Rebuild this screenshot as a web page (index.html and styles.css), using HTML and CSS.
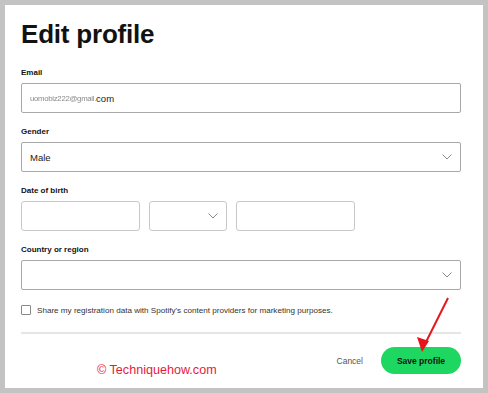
FILE: index.html
```html
<!DOCTYPE html>
<html lang="en">
<head>
<meta charset="utf-8">
<title>Edit profile</title>
<link rel="stylesheet" href="styles.css">
</head>
<body>
<div class="frame">
  <main class="card">
    <h1 class="title">Edit profile</h1>

    <div class="field">
      <label class="label">Email</label>
      <div class="input input-dark"><span class="blur">uomobiz222@gmail.</span><span>com</span></div>
    </div>

    <div class="field">
      <label class="label">Gender</label>
      <div class="input input-dark select"><span>Male</span>
        <svg class="chev" width="10" height="6" viewBox="0 0 10 6"><polyline points="0.5,0.5 5,5 9.5,0.5" fill="none" stroke="#8a8a8a" stroke-width="1"/></svg>
      </div>
    </div>

    <div class="field">
      <label class="label">Date of birth</label>
      <div class="dob">
        <div class="input input-light day"></div>
        <div class="input input-light select month">
          <svg class="chev" width="10" height="6" viewBox="0 0 10 6"><polyline points="0.5,0.5 5,5 9.5,0.5" fill="none" stroke="#8a8a8a" stroke-width="1"/></svg>
        </div>
        <div class="input input-light year"></div>
      </div>
    </div>

    <div class="field">
      <label class="label">Country or region</label>
      <div class="input input-dark select"><span></span>
        <svg class="chev" width="10" height="6" viewBox="0 0 10 6"><polyline points="0.5,0.5 5,5 9.5,0.5" fill="none" stroke="#8a8a8a" stroke-width="1"/></svg>
      </div>
    </div>

    <div class="consent">
      <span class="checkbox"></span>
      <span class="consent-text">Share my registration data with Spotify's content providers for marketing purposes.</span>
    </div>

    <div class="divider"></div>

    <div class="actions">
      <button class="cancel">Cancel</button>
      <button class="save">Save profile</button>
    </div>

    <div class="watermark">© Techniquehow.com</div>
    <svg class="arrow" width="478" height="383" viewBox="0 0 478 383">
      <line x1="443" y1="293" x2="418.5" y2="342" stroke="#e8141c" stroke-width="2"/>
      <polygon points="417,347 412,332 424,336" fill="#e8141c"/>
    </svg>
  </main>
</div>
</body>
</html>
```
FILE: styles.css
```css
* { box-sizing: border-box; }
html, body { margin: 0; padding: 0; }
body {
  background: #c3c3c3;
  width: 488px;
  height: 393px;
  overflow: hidden;
  font-family: "Liberation Sans", Arial, sans-serif;
}
.frame {
  padding: 5px 5px 5px 5px;
}
.card {
  position: relative;
  width: 478px;
  height: 383px;
  background: #ffffff;
  padding: 14px 22px 0 16px;
  display: flex;
  flex-direction: column;
}
.title {
  margin: 0;
  font-size: 26px;
  line-height: 30px;
  font-weight: 700;
  color: #121212;
  letter-spacing: -0.2px;
}
.field {
  display: flex;
  flex-direction: column;
  gap: 5px;
  margin-top: 14px;
}
.title + .field { margin-top: 19px; }
.label {
  font-size: 8px;
  line-height: 10px;
  font-weight: 700;
  color: #121212;
}
.input {
  height: 30px;
  width: 440px;
  border-radius: 2px;
  background: #fff;
  display: flex;
  align-items: center;
  padding: 0 8px;
  font-size: 9.5px;
  color: #222;
}
.input-dark { border: 1px solid #a8a8a8; }
.input-light { border: 1px solid #c8c8c8; border-radius: 3px; }
.blur {
  color: #8a8a8a;
  font-size: 7.8px;
  letter-spacing: -0.3px;
  filter: blur(0.5px);
}
.select { justify-content: space-between; }
.month { justify-content: flex-end; }
.chev { display: block; }
.dob {
  display: flex;
  gap: 9px;
}
.day, .year { width: 119px; }
.month { width: 78px; }
.consent {
  margin-top: 15px;
  display: flex;
  align-items: center;
  gap: 6px;
  height: 10px;
}
.checkbox {
  width: 10px;
  height: 10px;
  border: 1px solid #8a8a8a;
  border-radius: 1px;
  flex: none;
}
.consent-text {
  font-size: 8.1px;
  color: #333;
  white-space: nowrap;
}
.divider {
  margin-top: 17px;
  height: 2px;
  width: 440px;
  background: #e6e6e6;
}
.actions {
  margin-top: 13px;
  width: 440px;
  display: flex;
  justify-content: flex-end;
  align-items: center;
  gap: 18px;
}
.cancel {
  border: 0;
  background: none;
  padding: 0;
  font-family: inherit;
  font-size: 8.5px;
  color: #555;
}
.save {
  border: 0;
  width: 80px;
  height: 27px;
  border-radius: 14px;
  background: #1ed760;
  font-family: inherit;
  font-size: 8.5px;
  font-weight: 700;
  color: #121212;
}
.watermark {
  position: absolute;
  left: 92px;
  top: 358px;
  font-size: 12.6px;
  line-height: 14px;
  color: #e8193c;
}
.arrow {
  position: absolute;
  left: 0;
  top: 0;
  pointer-events: none;
}
```
